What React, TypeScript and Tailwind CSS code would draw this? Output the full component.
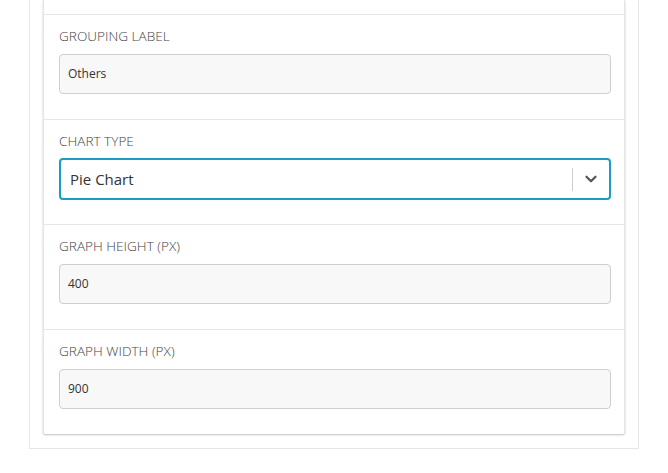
import { ChevronDown } from 'lucide-react'

const font = { fontFamily: '"Open Sans", "Noto Sans", sans-serif' }

function Field({ label, value }: { label: string; value: string }) {
    return (
        <div className="border-t border-[#e6e6e6] pl-[15px] pr-[13px] pt-[13px] pb-[25px]">
            <p className="text-[13.6px] leading-[16px] font-light text-[#444] mb-[10px]">{label}</p>
            <div className="h-[40px] rounded-[4px] border border-[#cfcfcf] bg-[#f8f8f8] px-[8px] flex items-center text-[12px] text-[#333]">
                {value}
            </div>
        </div>
    )
}

function SelectField({ label, value }: { label: string; value: string }) {
    return (
        <div className="border-t border-[#e6e6e6] pl-[15px] pr-[13px] pt-[13px] pb-[24px]">
            <p className="text-[13.6px] leading-[16px] font-light text-[#444] mb-[9px]">{label}</p>
            <div className="h-[42px] rounded-[4px] border-2 border-[#1b9cc2] bg-white flex items-center">
                <span className="flex-1 pl-[9px] text-[15px] text-[#333]">{value}</span>
                <span className="w-px h-[23px] bg-[#cccccc]" />
                <span className="w-[36px] flex items-center justify-center text-[#555]">
                    <ChevronDown className="h-[18px] w-[18px]" strokeWidth={3} />
                </span>
            </div>
        </div>
    )
}

export default function App() {
    return (
        <div className="w-[668px] h-[473px] bg-white" style={font}>
            <div className="ml-[29px] w-[610px] border-x border-b border-[#e6e6e6] px-[13px] pb-[14px]">
                <div className="border-x border-[#e6e6e6] bg-white shadow-[0_1px_2px_rgba(0,0,0,0.25)] rounded-b-[2px]">
                    <div className="h-[14px]" />
                    <Field label="GROUPING LABEL" value="Others" />
                    <SelectField label="CHART TYPE" value="Pie Chart" />
                    <Field label="GRAPH HEIGHT (PX)" value="400" />
                    <Field label="GRAPH WIDTH (PX)" value="900" />
                </div>
            </div>
        </div>
    )
}
